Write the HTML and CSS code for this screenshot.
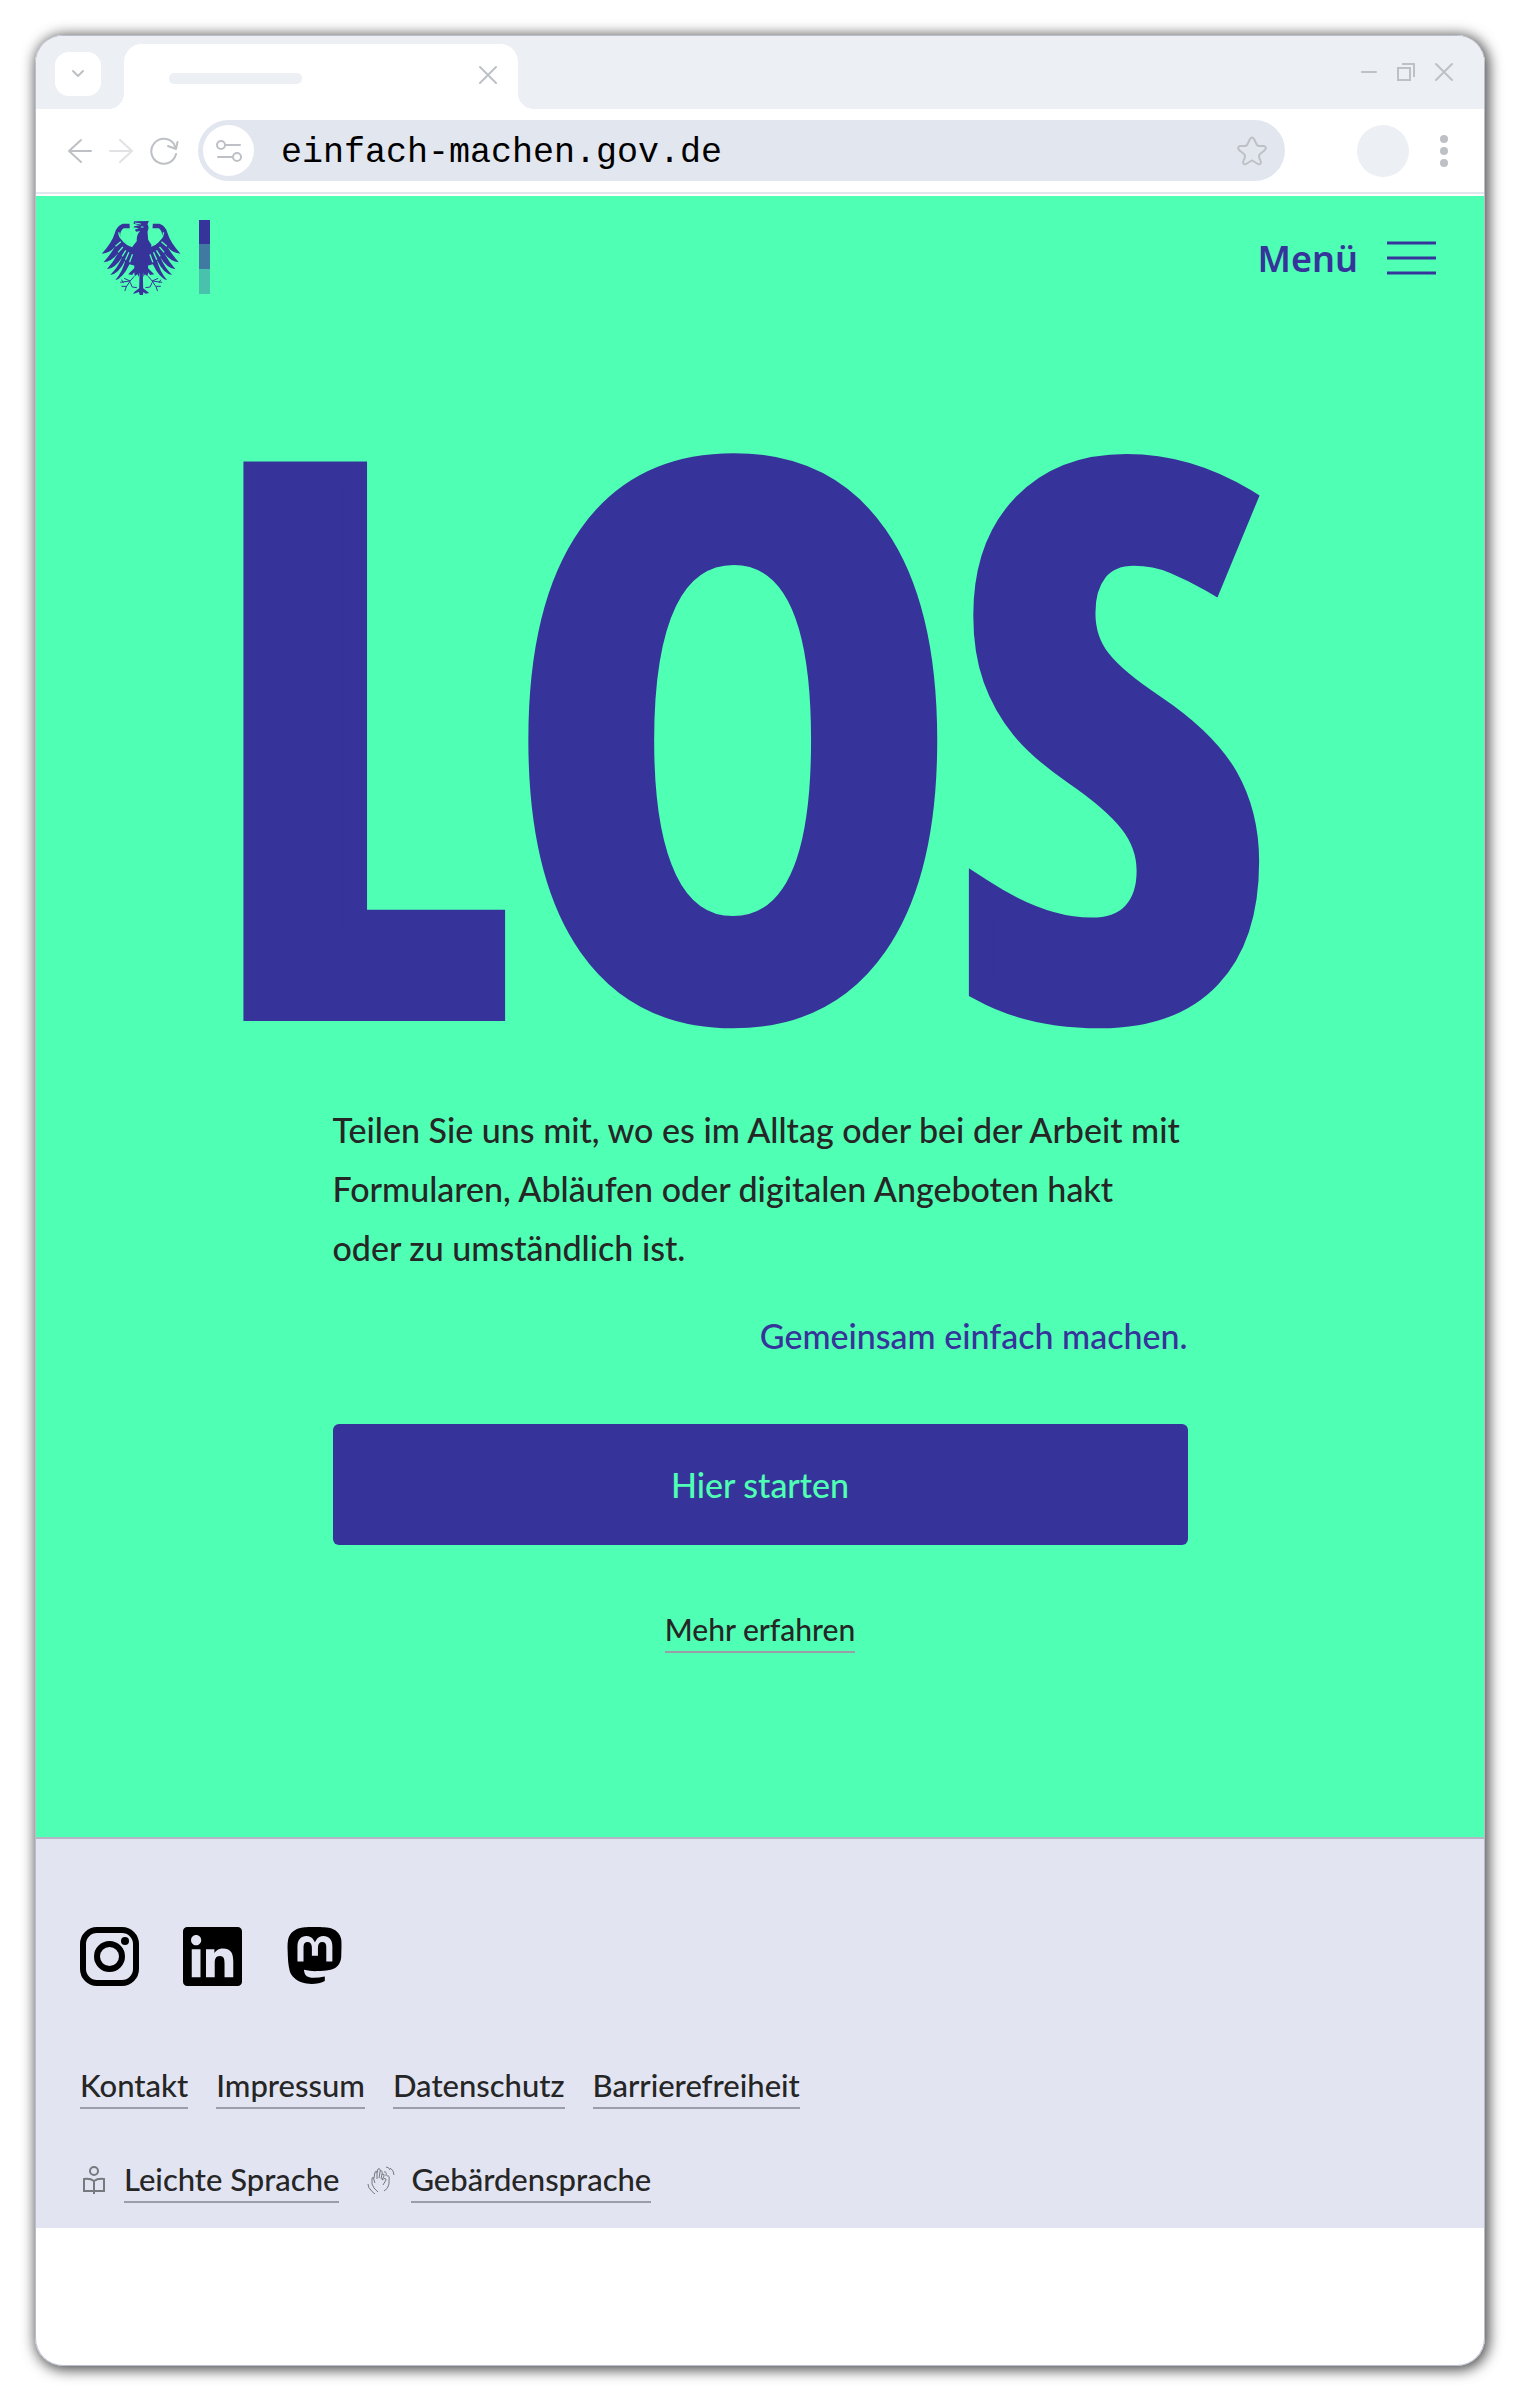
FILE: index.html
```
<!doctype html>
<html lang="de">
    <head>
        <meta charset="UTF-8" />
        <meta name="viewport" content="width=device-width, initial-scale=1.0" />
        <title>Einfach machen</title>
        <link rel="stylesheet" href="styles.css" />
    </head>
    <body>
        <div class="browser">
            <div class="tab-bar">
                <button class="tab-search" type="button" aria-label="Tabs durchsuchen">
                    <svg width="14" height="10" viewBox="0 0 14 10"><path d="M2 2l5 5 5-5" /></svg>
                </button>
                <div class="tab">
                    <span class="tab-title"></span>
                    <button type="button" aria-label="Tab schließen">
                        <svg width="20" height="20" viewBox="0 0 20 20"><path d="M2 2l16 16M18 2L2 18" /></svg>
                    </button>
                </div>
                <div class="window-controls">
                    <button type="button" aria-label="Minimieren">
                        <svg width="18" height="20" viewBox="0 0 18 20"><path d="M2 10h14" /></svg>
                    </button>
                    <button type="button" aria-label="Verkleinern">
                        <svg class="square" width="20" height="20" viewBox="0 0 20 20"><path d="M2 6h12v12H2zM6 2h12v13" /></svg>
                    </button>
                    <button type="button" aria-label="Schließen">
                        <svg width="20" height="20" viewBox="0 0 20 20"><path d="M2 2l16 16M18 2L2 18" /></svg>
                    </button>
                </div>
            </div>

            <div class="toolbar">
                <div class="nav-buttons">
                    <button type="button" aria-label="Zurück">
                        <svg width="26" height="28" viewBox="0 0 26 28"><path d="M24 14H2M14 3L2 14l12 11" /></svg>
                    </button>
                    <button class="inactive" type="button" aria-label="Vor">
                        <svg width="26" height="28" viewBox="0 0 26 28"><path d="M2 14h22M12 3l12 11-12 11" /></svg>
                    </button>
                    <button type="button" aria-label="Neu laden">
                        <svg width="30" height="28" viewBox="0 0 30 28">
                            <path d="M27 17a12.500 12.500 0 1 1-2-10l1 3M19 9l8 3 1.500-7" />
                        </svg>
                    </button>
                </div>
                <div class="address-bar">
                    <button class="site-info" type="button" aria-label="Website-Informationen">
                        <svg width="26" height="22" viewBox="0 0 26 22">
                            <circle cx="5" cy="5" r="4" /><path d="M9 5h15M2 17h15" /><circle cx="21" cy="17" r="4" />
                        </svg>
                    </button>
                    <input type="text" value="einfach-machen.gov.de" aria-label="Adresse" spellcheck="false" />
                    <button type="button" aria-label="Lesezeichen">
                        <svg width="30" height="30" viewBox="0 0 30 30">
                            <path d="M13 3q2-3 4 0l3 6q1 1 2 1h5q3 1 1 4l-5 4q-1 1-1 3l2 5q0 3-3 2l-5-3q-1-1-2 0l-5 3q-3 1-3-2l2-5q0-2-1-3l-5-4q-2-3 1-4h5q1 0 2-1z" />
                        </svg>
                    </button>
                </div>
                <span class="avatar"></span>
                <button type="button" aria-label="Mehr">
                    <svg class="dots" width="8" height="32" viewBox="0 0 8 32">
                        <circle cx="4" cy="4" r="4" /><circle cx="4" cy="16" r="4" /><circle cx="4" cy="28" r="4" />
                    </svg>
                </button>
            </div>

            <div class="page">
                <header class="site-header">
                    <a class="logo" href="#" aria-label="Startseite">
                        <svg class="eagle" width="79" height="76" viewBox="36 45 236 228">
                            <g id="wing">
                                <path d="M118 56L98 56Q78 64 74 84Q66 112 35 146Q58 144 74 126Q58 152 40 172Q66 169 84 144Q70 170 50 193Q76 190 96 156Q84 186 60 210Q86 206 106 164Q98 198 75 226Q98 220 118 178L134 182L142 130Q105 126 92 100Q86 82 100 70L119 70Z" />
                                <path class="cut" d="M86 82Q86 108 132 122M76 124L92 110M84 142L98 126M96 154L107 136M106 164L116 142M118 172L127 148" />
                                <path d="M135 150L132 190L114 208L126 210L132 202L134 214L142 208L146 216L152 150Z" />
                                <path class="leg" d="M132 214l-12 14-18-8M120 228l-30 4M120 228l-12 18M108 244l-14 0M108 246l-4 12M120 232l6 14 14 2M94 224l6 10" />
                            </g>
                            <use href="#wing" transform="matrix(-1 0 0 1 306 0)" />
                            <path d="M140 108Q138 90 150 78L138 80L134 74L146 70L130 67L132 64L148 61L130 56L132 49L176 48L172 58Q178 68 172 80L174 104L184 120L176 154L166 190L158 206L159 250L177 264L166 266L160 261L158 270L149 270L146 261L129 267L132 261L147 250L148 206L136 180L126 126Z" />
                            <path class="cut thin" d="M134 54l18 3M152 66h8" />
                        </svg>
                        <span class="logo-bar"></span>
                    </a>
                    <button class="menu-button" type="button">
                        Menü
                        <svg width="49" height="34" viewBox="0 0 49 34"><path d="M0 2h49M0 17h49M0 32h49" /></svg>
                    </button>
                </header>

                <main class="hero">
                    <h1>LOS</h1>
                    <div class="intro">
                        <p>Teilen Sie uns mit, wo es im Alltag oder bei der Arbeit mit Formularen, Abläufen oder digitalen Angeboten hakt oder zu umständlich ist.</p>
                        <p class="claim">Gemeinsam einfach machen.</p>
                        <button class="start-button" type="button">Hier starten</button>
                        <a class="text-link" href="#">Mehr erfahren</a>
                    </div>
                </main>

                <footer class="site-footer">
                    <div class="social">
                        <a href="#" aria-label="Instagram">
                            <svg width="59" height="59" viewBox="0 0 59 59">
                                <rect class="line" x="3" y="3" width="53" height="53" rx="14" />
                                <circle class="line" cx="29.500" cy="29.500" r="12.500" />
                                <circle cx="45" cy="14" r="4" />
                            </svg>
                        </a>
                        <a href="#" aria-label="LinkedIn">
                            <svg width="59" height="59" viewBox="0 0 24 24">
                                <path d="M20.447 20.452h-3.554v-5.569c0-1.328-.027-3.037-1.852-3.037-1.853 0-2.136 1.445-2.136 2.939v5.667H9.351V9h3.414v1.561h.046c.477-.9 1.637-1.850 3.370-1.850 3.601 0 4.267 2.370 4.267 5.455v6.286zM5.337 7.433c-1.144 0-2.063-.926-2.063-2.065 0-1.138.920-2.063 2.063-2.063 1.140 0 2.064.925 2.064 2.063 0 1.139-.925 2.065-2.064 2.065zm1.782 13.019H3.555V9h3.564v11.452zM22.225 0H1.771C.792 0 0 .774 0 1.729v20.542C0 23.227.792 24 1.771 24h20.451C23.200 24 24 23.227 24 22.271V1.729C24 .774 23.200 0 22.222 0h.003z" />
                            </svg>
                        </a>
                        <a href="#" aria-label="Mastodon">
                            <svg width="57" height="57" viewBox="0 0 24 24">
                                <path d="M23.268 5.313c-.350-2.578-2.617-4.610-5.304-5.004C17.510.242 15.792 0 11.813 0h-.030c-3.980 0-4.835.242-5.288.309C3.882.692 1.496 2.518.917 5.127.640 6.412.610 7.837.661 9.143c.074 1.874.088 3.745.260 5.611.118 1.240.325 2.470.620 3.680.550 2.237 2.777 4.098 4.960 4.857 2.336.792 4.849.923 7.256.380.265-.061.527-.132.786-.213.585-.184 1.270-.390 1.774-.753a.057.057 0 0 0 .023-.043v-1.809a.052.052 0 0 0-.020-.041.053.053 0 0 0-.046-.010 20.282 20.282 0 0 1-4.709.545c-2.730 0-3.463-1.284-3.674-1.818a5.593 5.593 0 0 1-.319-1.433.053.053 0 0 1 .066-.054c1.517.363 3.072.546 4.632.546.376 0 .750 0 1.125-.010 1.570-.044 3.224-.124 4.768-.422.038-.008.077-.015.110-.024 2.435-.464 4.753-1.920 4.989-5.604.008-.145.030-1.520.030-1.670.002-.512.167-3.630-.024-5.545zm-3.748 9.195h-2.561V8.290c0-1.309-.550-1.976-1.670-1.976-1.230 0-1.846.790-1.846 2.350v3.403h-2.546V8.663c0-1.560-.617-2.350-1.848-2.350-1.112 0-1.668.668-1.670 1.977v6.218H4.822V8.102c0-1.310.337-2.350 1.011-3.120.696-.770 1.608-1.164 2.740-1.164 1.311 0 2.302.500 2.962 1.498l.638 1.060.638-1.060c.660-.999 1.650-1.498 2.960-1.498 1.130 0 2.043.395 2.740 1.164.675.770 1.012 1.810 1.012 3.120z" />
                            </svg>
                        </a>
                    </div>
                    <nav class="footer-links">
                        <a class="text-link" href="#">Kontakt</a>
                        <a class="text-link" href="#">Impressum</a>
                        <a class="text-link" href="#">Datenschutz</a>
                        <a class="text-link" href="#">Barrierefreiheit</a>
                    </nav>
                    <nav class="footer-links">
                        <span class="icon-link">
                            <svg width="28" height="28" viewBox="0 0 28 28">
                                <circle cx="14" cy="5" r="4" />
                                <path d="M14 15q-4-3-10-2v12h10zM14 15q4-3 10-2v12H14zM14 14v14" />
                            </svg>
                            <a class="text-link" href="#">Leichte Sprache</a>
                        </span>
                        <span class="icon-link">
                            <svg class="hands" width="28" height="28" viewBox="0 0 28 28">
                                <path d="M11 26q-5-4-6-8l0-6q2-2 2 2l1 3M7 12l1-6q2-2 2 1l0 6M10 7l1-4q3-1 2 3l-1 6M13 5q3-1 2 3l-1 5M15 8q3 0 2 2l-2 4q4-3 4 0l-3 5" />
                                <path d="M17 6q3-1 2 4M20 10q3-1 2 4v4q-1 5-5 7M19 1q3 0 4 3M23 2q4 2 4 7M1 18q0 4 3 6M3 23q2 3 5 5" />
                            </svg>
                            <a class="text-link" href="#">Gebärdensprache</a>
                        </span>
                    </nav>
                </footer>
            </div>
        </div>
    </body>
</html>
```
FILE: styles.css
```
* {
    box-sizing: border-box;
}

body {
    margin: 0;
    padding: 35px;
    background: #fff;
    color: #262626;
    font-family: Lato, "Open Sans", sans-serif;
    font-weight: 500;
}

h1,
p {
    margin: 0;
}

button {
    padding: 0;
    border: none;
    background: none;
    font: inherit;
    cursor: pointer;
}

svg {
    display: block;
}

/* browser frame */
.browser {
    padding-bottom: 137px;
    border: 1px solid #b9bdd0;
    border-radius: 28px;
    overflow: hidden;
    box-shadow: 2px 2px 14px 2px rgba(0, 0, 0, 0.7);
}

.tab-bar svg,
.toolbar svg {
    fill: none;
    stroke: #bdc1c5;
    stroke-width: 2;
    stroke-linecap: round;
    stroke-linejoin: round;
}

.tab-bar {
    display: flex;
    align-items: flex-end;
    height: 73px;
    padding: 0 30px 0 19px;
    background: #ecf0f4;
}

.tab-search {
    display: flex;
    align-items: center;
    justify-content: center;
    width: 46px;
    height: 44px;
    margin: 0 23px 13px 0;
    border-radius: 14px;
    background: #fff;
}

.tab {
    position: relative;
    display: flex;
    align-items: center;
    justify-content: space-between;
    width: 394px;
    height: 65px;
    padding: 0 20px 3px 45px;
    border-radius: 18px 18px 0 0;
    background: #fff;
}

/* the curved feet of the active tab */
.tab::before,
.tab::after {
    content: "";
    position: absolute;
    bottom: 0;
    width: 16px;
    height: 16px;
}

.tab::before {
    right: 100%;
    background: radial-gradient(circle at 0 0, #ecf0f4 16px, #fff 16px);
}

.tab::after {
    left: 100%;
    background: radial-gradient(circle at 100% 0, #ecf0f4 16px, #fff 16px);
}

.tab-title {
    width: 133px;
    height: 11px;
    margin-top: 6px;
    border-radius: 5px;
    background: #ecf0f4;
}

.window-controls {
    display: flex;
    gap: 18px;
    margin: 0 0 27px auto;
}

.tab-bar .square {
    stroke-linecap: butt;
    stroke-linejoin: miter;
}

.toolbar {
    display: flex;
    align-items: center;
    height: 85px;
    padding: 0 36px 0 31px;
    border-bottom: 2px solid #e2e6ed;
    background: #fff;
}

.nav-buttons {
    display: flex;
    gap: 15px;
    margin-right: 19px;
}

.nav-buttons .inactive {
    opacity: 0.45;
}

.address-bar {
    display: flex;
    flex: 1;
    align-items: center;
    min-width: 0;
    height: 61px;
    padding: 0 18px 0 5px;
    border-radius: 31px;
    background: #e2e6ee;
}

.site-info {
    display: flex;
    flex: none;
    align-items: center;
    justify-content: center;
    width: 51px;
    height: 51px;
    border-radius: 50%;
    background: #fff;
}

.address-bar input {
    flex: 1;
    min-width: 0;
    margin-left: 27px;
    padding: 4px 0 0;
    border: none;
    background: none;
    color: #000;
    font-family: "Liberation Mono", monospace;
    font-size: 35px;
}

.avatar {
    flex: none;
    width: 52px;
    height: 52px;
    margin: 0 31px 0 72px;
    border-radius: 50%;
    background: #ecf0f4;
}

.toolbar .dots {
    fill: #bdc1c5;
    stroke: none;
}

/* page */
.page {
    border-top: 2px solid #fff;
    background: #4fffb3;
}

.site-header {
    display: flex;
    align-items: flex-start;
    justify-content: space-between;
    padding: 24px 48px 0 66px;
}

.logo {
    display: flex;
    gap: 18px;
}

.eagle {
    fill: #36349b;
}

.eagle .cut {
    fill: none;
    stroke: #4fffb3;
    stroke-width: 4;
}

.eagle .thin {
    stroke-width: 3;
}

.eagle .leg {
    fill: none;
    stroke: #36349b;
    stroke-width: 3;
}

.logo-bar {
    width: 11px;
    height: 74px;
    background: linear-gradient(#36349b 33%, #407aa3 33% 66%, #48c2ac 66%);
}

.menu-button {
    display: flex;
    align-items: center;
    gap: 29px;
    height: 76px;
    color: #36349b;
    font-family: "Noto Sans", sans-serif;
    font-size: 36px;
    font-weight: 600;
}

.menu-button svg {
    stroke: #36349b;
    stroke-width: 3;
}

.hero {
    padding: 102px 20px 184px;
}

h1 {
    padding-right: 46px;
    color: #36349b;
    font-family: "Open Sans Condensed", "Roboto Condensed", sans-serif;
    font-size: 750px;
    font-weight: 700;
    line-height: 640px;
    text-align: center;
    white-space: nowrap;
    -webkit-text-stroke: 24px #36349b;
}

.intro {
    display: flex;
    flex-direction: column;
    max-width: 855px;
    margin: 62px auto 0;
    font-size: 34px;
    line-height: 59px;
}

.claim {
    margin-top: 29px;
    color: #36349b;
    text-align: right;
}

.start-button {
    height: 121px;
    margin-top: 59px;
    border-radius: 6px;
    background: #36349b;
    color: #4fffb3;
}

.text-link {
    border-bottom: 2px solid #9b9da9;
    color: inherit;
    font-size: 31px;
    line-height: 44px;
    text-decoration: none;
}

.intro .text-link {
    align-self: center;
    margin-top: 62px;
    font-size: 30px;
}

.site-footer {
    padding: 88px 44px 25px;
    border-top: 2px solid #b3b6c4;
    background: #e2e4f2;
}

.social {
    display: flex;
    gap: 44px;
    margin-bottom: 77px;
}

.social .line {
    fill: none;
    stroke: #000;
    stroke-width: 6;
}

.footer-links {
    display: flex;
    flex-wrap: wrap;
    gap: 28px;
}

.footer-links + .footer-links {
    margin-top: 48px;
}

.icon-link {
    display: flex;
    align-items: center;
    gap: 16px;
}

.icon-link svg {
    fill: none;
    stroke: #77797f;
    stroke-width: 2;
}

.icon-link .hands {
    stroke-width: 1;
}

@media (max-width: 1200px) {
    h1 {
        padding-right: 0;
        font-size: 50vw;
        line-height: 1;
        -webkit-text-stroke-width: 1vw;
    }
}
```
